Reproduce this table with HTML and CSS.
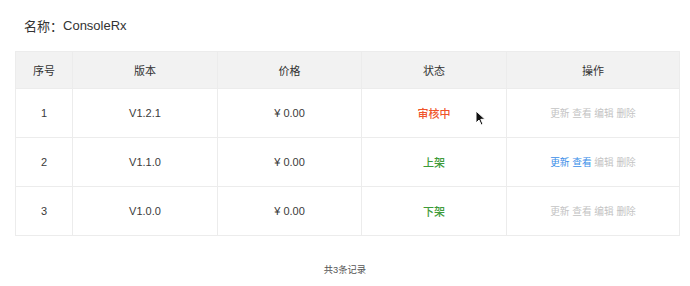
FILE: index.html
```html
<!DOCTYPE html>
<html lang="zh">
<head>
<meta charset="utf-8">
<link rel="stylesheet" href="styles.css">
</head>
<body>
<div class="page">
  <div class="title"><span class="label">名称：</span><span class="name">ConsoleRx</span></div>
  <table class="grid">
    <colgroup>
      <col class="c1"><col class="c2"><col class="c3"><col class="c4"><col class="c5">
    </colgroup>
    <thead>
      <tr><th>序号</th><th>版本</th><th>价格</th><th>状态</th><th>操作</th></tr>
    </thead>
    <tbody>
      <tr>
        <td>1</td><td>V1.2.1</td><td>¥ 0.00</td>
        <td class="status-cell"><span class="st st-review">审核中</span>
          <svg class="cursor" width="11" height="16" viewBox="0 0 11 16"><path d="M1 1 L1 13 L4 10 L6.2 15 L8 14.2 L5.8 9.3 L10 9.3 Z" fill="#111" stroke="#fff" stroke-width="1" stroke-linejoin="round"/></svg>
        </td>
        <td class="ops"><span class="op">更新</span> <span class="op">查看</span> <span class="op">编辑</span> <span class="op">删除</span></td>
      </tr>
      <tr>
        <td>2</td><td>V1.1.0</td><td>¥ 0.00</td>
        <td><span class="st st-on">上架</span></td>
        <td class="ops"><span class="op op-active">更新</span> <span class="op op-active">查看</span> <span class="op">编辑</span> <span class="op">删除</span></td>
      </tr>
      <tr>
        <td>3</td><td>V1.0.0</td><td>¥ 0.00</td>
        <td><span class="st st-off">下架</span></td>
        <td class="ops"><span class="op">更新</span> <span class="op">查看</span> <span class="op">编辑</span> <span class="op">删除</span></td>
      </tr>
    </tbody>
  </table>
  <div class="footer">共3条记录</div>
</div>
</body>
</html>
```
FILE: styles.css
```css
html, body {
  margin: 0;
  padding: 0;
  background: #fff;
}
body {
  font-family: "Liberation Sans", "Noto Sans CJK SC", sans-serif;
  color: #333;
  width: 690px;
  height: 286px;
  overflow: hidden;
}
.page {
  display: flex;
  flex-direction: column;
}
.title {
  height: 51px;
  padding-left: 24px;
  display: flex;
  align-items: center;
  font-size: 13px;
  color: #333;
  box-sizing: border-box;
  padding-bottom: 1px;
}
.grid {
  margin-left: 15px;
  width: 664px;
  border-collapse: collapse;
  table-layout: fixed;
  font-size: 11px;
  color: #3a3a3a;
}
.c1 { width: 57px; }
.c2 { width: 145px; }
.c3 { width: 144px; }
.c4 { width: 145px; }
.c5 { width: 173px; }
.grid th {
  background: #f2f2f2;
  height: 37px;
  padding: 0;
  font-weight: normal;
  color: #333;
  border: 1px solid #ececec;
  box-sizing: border-box;
}
.grid td {
  height: 49px;
  padding: 0;
  text-align: center;
  border: 1px solid #ececec;
  box-sizing: border-box;
}
.status-cell {
  position: relative;
}
.st {
  font-size: 11px;
  font-weight: 500;
}
.st-review { color: #f0542a; }
.st-on { color: #3e9b3a; }
.st-off { color: #3e9b3a; }
.cursor {
  position: absolute;
  left: 113px;
  top: 21px;
}
.ops {
  font-size: 9.7px;
  color: #c3c3c3;
}
.op-active {
  color: #3a8ee8;
}
.footer {
  height: 50px;
  box-sizing: border-box;
  padding-top: 16px;
  display: flex;
  align-items: center;
  justify-content: center;
  font-size: 9.3px;
  color: #555;
}
```
